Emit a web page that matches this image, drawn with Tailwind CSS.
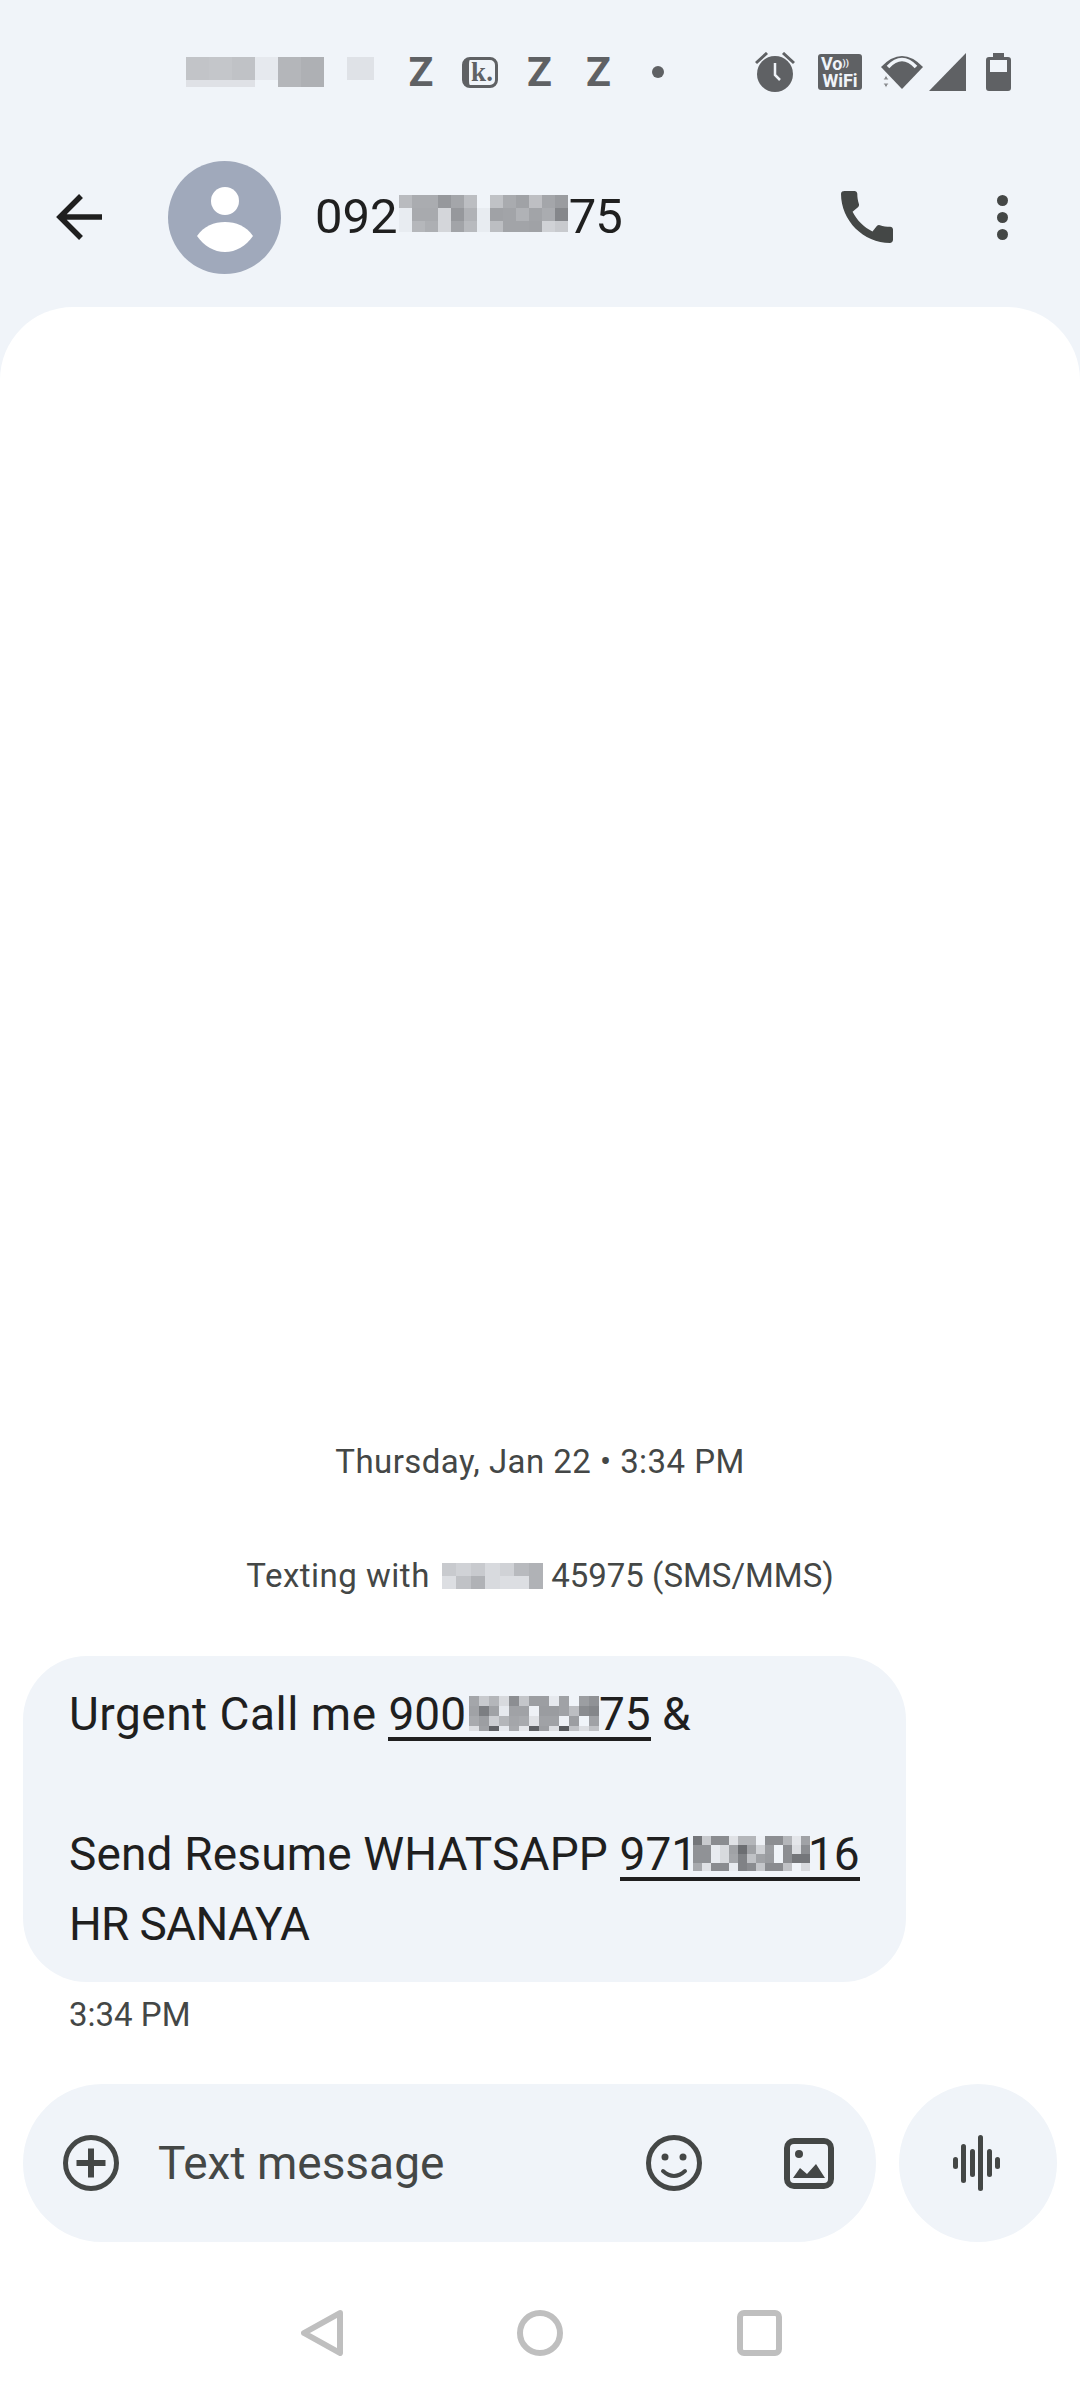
<!DOCTYPE html>
<html lang="en">
<head>
    <meta charset="UTF-8">
    <meta name="viewport" content="width=device-width, initial-scale=1.0">
    <title>Messages</title>
    <script src="https://cdn.jsdelivr.net/npm/@tailwindcss/browser@4"></script>
</head>
<body class="bg-[#f0f4f9]">
<div class="w-[1080px] h-[2400px] flex flex-col overflow-hidden bg-[#f0f4f9] font-[family-name:Roboto,sans-serif]">

    <!-- status bar -->
    <div class="h-[144px] shrink-0 flex items-center pl-[186px] text-[#5f6164]">
        <div class="flex items-start gap-[23px] w-[188px]">
            <div class="grid grid-cols-[repeat(6,23px)] grid-rows-[23px_7px]">
                <div class="bg-[#c2c4c8]"></div><div class="bg-[#c4c6ca]"></div><div class="bg-[#c0c2c6]"></div><div class="bg-[#e6e9ee]"></div><div class="bg-[#b4b6ba]"></div><div class="bg-[#aeb0b4]"></div>
                <div class="bg-[#dfe1e6]"></div><div class="bg-[#dfe1e6]"></div><div class="bg-[#dfe1e6]"></div><div class="bg-[#f0f4f9]"></div><div class="bg-[#b4b6ba]"></div><div class="bg-[#aeb0b4]"></div>
            </div>
            <div class="w-[27px] h-[23px] bg-[#dfe2e7]"></div>
        </div>
        <div class="ml-[34px] w-[26px] text-center text-[41px] leading-[41px] font-bold">Z</div>
        <div class="ml-[28px] w-[36px] h-[31px] rounded-[8px] border-y-[3px] border-r-[3px] border-l-[7px] border-[#5f6164] flex items-center justify-center font-[family-name:Liberation_Serif,serif] font-bold text-[27px] leading-none">k.</div>
        <div class="ml-[29px] w-[25px] text-center text-[41px] leading-[41px] font-bold">Z</div>
        <div class="ml-[34px] w-[25px] text-center text-[41px] leading-[41px] font-bold">Z</div>
        <div class="ml-[41px] w-[12px] h-[12px] rounded-full bg-[#5f6164]"></div>
        <svg class="ml-[91px]" width="40" height="40" viewBox="0 0 40 40">
            <path d="M1 11 L12 1 M39 11 L28 1" stroke="#5f6164" stroke-width="3"/>
            <circle cx="20" cy="22" r="18" fill="#5f6164"/>
            <path d="M20 11 V23 L25 28" stroke="#f0f4f9" stroke-width="2.5" fill="none"/>
        </svg>
        <div class="ml-[23px] w-[44px] h-[36px] rounded-[3px] bg-[#5f6164] text-[#f0f4f9] flex flex-col items-center justify-center font-bold text-[18px] leading-[17px]">
            <div class="w-full pl-[3px]">Vo<span class="text-[9px] align-top">))</span></div>
            <div>WiFi</div>
        </div>
        <svg class="ml-[19px]" width="42" height="36" viewBox="0 0 42 36">
            <path d="M0 13 Q21 -9 42 13 L21 35 Z" fill="#5f6164"/>
            <path d="M7 13 Q21 -2 35 13" stroke="#f0f4f9" stroke-width="3.5" fill="none"/>
            <path d="M5 21 L8 26 H2 Z M2 29 H8 L5 34 Z" fill="#8b8d90" stroke="#f0f4f9" stroke-width="1"/>
        </svg>
        <svg class="ml-[6px]" width="37" height="38" viewBox="0 0 37 38">
            <path d="M37 0 V38 H0 Z" fill="#5f6164"/>
        </svg>
        <svg class="ml-[20px]" width="25" height="38" viewBox="0 0 25 38">
            <path d="M7 0 H18 V4 H22 Q25 4 25 7 V35 Q25 38 22 38 H3 Q0 38 0 35 V7 Q0 4 3 4 H7 Z" fill="#5f6164"/>
            <rect x="4" y="7" width="17" height="12" fill="#f0f4f9"/>
        </svg>
    </div>

    <!-- conversation header -->
    <div class="h-[146px] mb-[17px] shrink-0 flex items-center pl-[56px] pr-[72px]">
        <svg width="48" height="48" viewBox="0 0 48 48" fill="none" stroke="#1f1f1f" stroke-width="5.5">
            <path d="M46 24 H6 M25 3 L4 24 L25 45"/>
        </svg>
        <div class="ml-[64px] w-[113px] h-[113px] rounded-full bg-[#a0a9bb] shrink-0">
            <svg width="113" height="113" viewBox="0 0 113 113" fill="#fff">
                <circle cx="57" cy="40" r="14"/>
                <path d="M29 75 C36 65 46 61 57 61 S78 65 85 75 C78 85 68 91 57 91 S36 85 29 75 Z"/>
            </svg>
        </div>
        <div class="ml-[34px] flex text-[49px] leading-[60px] text-[#1f1f1f]">
            <span>092</span>
            <div class="relative z-10 mt-[8px] ml-[1px] h-[37px] grid grid-cols-[repeat(13,13px)] grid-rows-[13px_13px_11px]">
                <div class="bg-[#b9bbbf]"></div><div class="bg-[#aaacb0]"></div><div class="bg-[#aaacb0]"></div><div class="bg-[#96989c]"></div><div class="bg-[#a4a6aa]"></div><div class="bg-[#bcbec2]"></div><div class="bg-[#f0f4f9]"></div><div class="bg-[#c0c2c6]"></div><div class="bg-[#a9abaf]"></div><div class="bg-[#a0a2a6]"></div><div class="bg-[#bebfc3]"></div><div class="bg-[#a4a6aa]"></div><div class="bg-[#9a9ca0]"></div>
                <div class="bg-[#e8ecf1]"></div><div class="bg-[#a8aaae]"></div><div class="bg-[#a8aaae]"></div><div class="bg-[#d4d6da]"></div><div class="bg-[#96989c]"></div><div class="bg-[#b0b2b6]"></div><div class="bg-[#e8ecf1]"></div><div class="bg-[#a0a2a6]"></div><div class="bg-[#a2a4a8]"></div><div class="bg-[#b0b2b6]"></div><div class="bg-[#a2a4a8]"></div><div class="bg-[#aaacb0]"></div><div class="bg-[#85878b]"></div>
                <div class="bg-[#e8ecf1]"></div><div class="bg-[#b5b7bb]"></div><div class="bg-[#adafb3]"></div><div class="bg-[#d4d6da]"></div><div class="bg-[#a2a4a8]"></div><div class="bg-[#b8babe]"></div><div class="bg-[#e8ecf1]"></div><div class="bg-[#bcbec2]"></div><div class="bg-[#a2a4a8]"></div><div class="bg-[#a2a4a8]"></div><div class="bg-[#a0a2a6]"></div><div class="bg-[#d0d2d6]"></div><div class="bg-[#c8cace]"></div>
            </div>
            <span class="ml-[1px] tracking-[-1px]">75</span>
        </div>
        <div class="flex-1"></div>
        <svg width="52" height="52" viewBox="3 3 18 18" fill="#444746">
            <path d="M20.01 15.38c-1.23 0-2.42-.2-3.53-.56a.977.977 0 00-1.01.24l-1.57 1.97c-2.83-1.35-5.48-3.9-6.89-6.83l1.95-1.66c.27-.28.35-.67.24-1.02-.37-1.11-.56-2.3-.56-3.53 0-.54-.45-.99-.99-.99H4.19C3.65 3 3 3.24 3 3.99 3 13.28 10.73 21 20.01 21c.71 0 .99-.63.99-1.18v-3.45c0-.54-.45-.99-.99-.99z"/>
        </svg>
        <div class="ml-[104px] flex flex-col gap-[6px]">
            <div class="w-[11px] h-[11px] rounded-full bg-[#444746]"></div>
            <div class="w-[11px] h-[11px] rounded-full bg-[#444746]"></div>
            <div class="w-[11px] h-[11px] rounded-full bg-[#444746]"></div>
        </div>
    </div>

    <!-- white sheet -->
    <div class="flex-1 flex flex-col justify-end bg-white rounded-t-[73px]">
        <div class="text-center text-[33px] leading-[40px] tracking-[0.45px] text-[#444746]">Thursday, Jan 22 • 3:34 PM</div>
        <div class="mt-[74px] flex justify-center text-[33px] leading-[40px] text-[#444746]">
            <span class="whitespace-pre tracking-[0.5px]">Texting with </span>
            <div class="ml-[3px] mt-[7px] h-[26px] grid grid-cols-[repeat(7,14.5px)] grid-rows-[13px_13px]">
                <div class="bg-[#c8cace]"></div><div class="bg-[#d0d2d6]"></div><div class="bg-[#c8cace]"></div><div class="bg-[#d8dade]"></div><div class="bg-[#d0d2d6]"></div><div class="bg-[#b8babe]"></div><div class="bg-[#b0b2b6]"></div>
                <div class="bg-[#dcdee2]"></div><div class="bg-[#c0c2c6]"></div><div class="bg-[#b0b2b6]"></div><div class="bg-[#d8dade]"></div><div class="bg-[#dcdee2]"></div><div class="bg-[#dcdee2]"></div><div class="bg-[#b0b2b6]"></div>
            </div>
            <span class="whitespace-pre"> 45975 (SMS/MMS)</span>
        </div>

        <!-- received message -->
        <div class="mt-[60px] ml-[23px] w-[883px] h-[326px] rounded-[64px] bg-[#f0f4f9] pl-[46px] py-[23px] text-[46px] leading-[70px] text-[#1f1f1f]">
            <div class="flex h-[70px]">
                <span class="whitespace-pre tracking-[0.5px]">Urgent Call me </span>
                <span class="flex h-[62px] border-b-[4px] border-[#1f1f1f]">
                    <span>900</span>
                    <div class="relative z-10 ml-[3px] mt-[17px] h-[35px] grid grid-cols-[repeat(13,10px)] grid-rows-[10px_10px_10px_5px]">
                        <div class="bg-[#a4a6aa]"></div><div class="bg-[#c8cace]"></div><div class="bg-[#b4b6ba]"></div><div class="bg-[#d8dade]"></div><div class="bg-[#8c8e92]"></div><div class="bg-[#c4c6ca]"></div><div class="bg-[#9c9ea2]"></div><div class="bg-[#9c9ea2]"></div><div class="bg-[#e6e9ee]"></div><div class="bg-[#a0a2a6]"></div><div class="bg-[#f0f4f9]"></div><div class="bg-[#9c9ea2]"></div><div class="bg-[#909296]"></div>
                        <div class="bg-[#a0a2a6]"></div><div class="bg-[#7c7e82]"></div><div class="bg-[#a0a2a6]"></div><div class="bg-[#e6e9ee]"></div><div class="bg-[#a0a2a6]"></div><div class="bg-[#a0a2a6]"></div><div class="bg-[#eef1f6]"></div><div class="bg-[#9a9ca0]"></div><div class="bg-[#9a9ca0]"></div><div class="bg-[#a0a2a6]"></div><div class="bg-[#bcbec2]"></div><div class="bg-[#8a8c90]"></div><div class="bg-[#84868a]"></div>
                        <div class="bg-[#a8aaae]"></div><div class="bg-[#9c9ea2]"></div><div class="bg-[#ccced2]"></div><div class="bg-[#b4b6ba]"></div><div class="bg-[#a4a6aa]"></div><div class="bg-[#a8aaae]"></div><div class="bg-[#e0e2e6]"></div><div class="bg-[#a0a2a6]"></div><div class="bg-[#a0a2a6]"></div><div class="bg-[#eef1f6]"></div><div class="bg-[#9c9ea2]"></div><div class="bg-[#f0f4f9]"></div><div class="bg-[#a0a2a6]"></div>
                        <div class="bg-[#dcdee2]"></div><div class="bg-[#a0a2a6]"></div><div class="bg-[#606266]"></div><div class="bg-[#e6e9ee]"></div><div class="bg-[#a8aaae]"></div><div class="bg-[#e4e6ea]"></div><div class="bg-[#5e6064]"></div><div class="bg-[#9c9ea2]"></div><div class="bg-[#dcdee2]"></div><div class="bg-[#585a5e]"></div><div class="bg-[#c0c2c6]"></div><div class="bg-[#dcdee2]"></div><div class="bg-[#c0c2c6]"></div>
                    </div>
                    <span class="ml-[-26px]">975</span>
                </span>
                <span class="whitespace-pre"> &amp;</span>
            </div>
            <div class="h-[70px]"></div>
            <div class="flex h-[70px]">
                <span class="whitespace-pre tracking-[0.15px]">Send Resume WHATSAPP </span>
                <span class="flex h-[62px] border-b-[4px] border-[#1f1f1f]">
                    <span>971</span>
                    <div class="relative z-10 ml-[-4px] mt-[17px] h-[35px] grid grid-cols-[repeat(13,9px)] grid-rows-[9px_9px_9px_8px]">
                        <div class="bg-[#74767a]"></div><div class="bg-[#c8cace]"></div><div class="bg-[#8a8c90]"></div><div class="bg-[#8a8c90]"></div><div class="bg-[#e0e2e6]"></div><div class="bg-[#b4b6ba]"></div><div class="bg-[#b4b6ba]"></div><div class="bg-[#eef1f6]"></div><div class="bg-[#8c8e92]"></div><div class="bg-[#8c8e92]"></div><div class="bg-[#b4b6ba]"></div><div class="bg-[#e4e6ea]"></div><div class="bg-[#a0a2a6]"></div>
                        <div class="bg-[#909296]"></div><div class="bg-[#909296]"></div><div class="bg-[#e8ebf0]"></div><div class="bg-[#d8dade]"></div><div class="bg-[#a0a2a6]"></div><div class="bg-[#6c6e72]"></div><div class="bg-[#a0a2a6]"></div><div class="bg-[#d0d2d6]"></div><div class="bg-[#9c9ea2]"></div><div class="bg-[#f0f4f9]"></div><div class="bg-[#8c8e92]"></div><div class="bg-[#dcdee2]"></div><div class="bg-[#8c8e92]"></div>
                        <div class="bg-[#909296]"></div><div class="bg-[#909296]"></div><div class="bg-[#e8ebf0]"></div><div class="bg-[#d8dade]"></div><div class="bg-[#a4a6aa]"></div><div class="bg-[#808286]"></div><div class="bg-[#c0c2c6]"></div><div class="bg-[#a0a2a6]"></div><div class="bg-[#9a9ca0]"></div><div class="bg-[#f0f4f9]"></div><div class="bg-[#8c8e92]"></div><div class="bg-[#74767a]"></div><div class="bg-[#74767a]"></div>
                        <div class="bg-[#a8aaae]"></div><div class="bg-[#e0e2e6]"></div><div class="bg-[#8a8c90]"></div><div class="bg-[#8a8c90]"></div><div class="bg-[#e8ebf0]"></div><div class="bg-[#808286]"></div><div class="bg-[#8a8c90]"></div><div class="bg-[#c4c6ca]"></div><div class="bg-[#8a8c90]"></div><div class="bg-[#8a8c90]"></div><div class="bg-[#c0c2c6]"></div><div class="bg-[#f0f4f9]"></div><div class="bg-[#d8dade]"></div>
                    </div>
                    <span class="ml-[-28px]">416</span>
                </span>
            </div>
            <div class="tracking-[-0.7px]">HR SANAYA</div>
        </div>
        <div class="mt-[13px] ml-[69px] text-[33px] leading-[40px] text-[#444746]">3:34 PM</div>

        <!-- compose row -->
        <div class="mt-[49px] px-[23px] flex justify-between">
            <div class="w-[853px] h-[158px] rounded-full bg-[#f0f4f9] flex items-center pl-[40px] pr-[42px]">
                <svg width="56" height="56" viewBox="0 0 56 56" fill="none" stroke="#444746">
                    <circle cx="28" cy="28" r="25.5" stroke-width="5"/>
                    <path d="M13.5 28 H42.5 M28 13.5 V42.5" stroke-width="6"/>
                </svg>
                <div class="ml-[39px] flex-1 text-[46px] leading-[60px] text-[#444746]">Text message</div>
                <svg width="56" height="56" viewBox="0 0 56 56" fill="none" stroke="#444746">
                    <circle cx="28" cy="28" r="25.5" stroke-width="5"/>
                    <circle cx="19" cy="22" r="3.5" fill="#444746" stroke="none"/>
                    <circle cx="37" cy="22" r="3.5" fill="#444746" stroke="none"/>
                    <path d="M17 36 Q28 46 39 36" stroke-width="4" stroke-linecap="round"/>
                </svg>
                <svg class="ml-[82px]" width="50" height="51" viewBox="0 0 50 51" fill="none">
                    <rect x="3" y="3" width="44" height="45" rx="7" stroke="#444746" stroke-width="6"/>
                    <circle cx="15" cy="16" r="4" fill="#444746"/>
                    <path d="M9 40 L16 30 L23 36 L32 26 L41 40 Z" fill="#444746"/>
                </svg>
            </div>
            <div class="w-[158px] h-[158px] rounded-full bg-[#f0f4f9] flex items-center justify-center gap-[3.5px] pr-[3px]">
                <div class="w-[5px] h-[12px] rounded-full bg-[#444746]"></div>
                <div class="w-[5px] h-[39px] rounded-full bg-[#444746]"></div>
                <div class="w-[5px] h-[28px] rounded-full bg-[#444746]"></div>
                <div class="w-[5px] h-[56px] rounded-full bg-[#444746]"></div>
                <div class="w-[5px] h-[28px] rounded-full bg-[#444746]"></div>
                <div class="w-[5px] h-[12px] rounded-full bg-[#444746]"></div>
            </div>
        </div>

        <!-- nav bar -->
        <div class="h-[158px] pt-[68px] pl-[301px] flex items-start gap-[174px]">
            <svg width="42" height="46" viewBox="0 0 42 46" fill="none" stroke="#bfbfbf" stroke-width="6" stroke-linejoin="round">
                <path d="M39 3 L3 23 L39 43 Z"/>
            </svg>
            <div class="w-[46px] h-[46px] rounded-full border-[6px] border-[#bfbfbf]"></div>
            <div class="w-[45px] h-[46px] rounded-[7px] border-[6px] border-[#bfbfbf]"></div>
        </div>
    </div>
</div>
</body>
</html>
